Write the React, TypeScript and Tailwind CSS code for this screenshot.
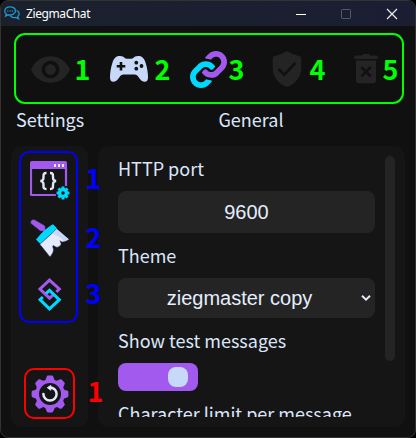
import React from "react";

const cjk = "font-['Noto_Sans_CJK_SC',sans-serif]";

function Num({ n, className }: { n: number; className: string }) {
  return (
    <span className={`${cjk} w-[17px] text-center text-[27px] leading-[40px] font-bold ${className}`}>{n}</span>
  );
}

function ChatLogo() {
  return (
    <svg width="16" height="15" viewBox="0 0 16 15" fill="none" stroke="#2597cc" strokeWidth="1.3" className="shrink-0">
      <path d="M6 .8C3 .8.8 2.5.8 4.9c0 1.300.6 2.300 1.500 3L1.600 10l2.600-1.200c2.900.7 7.300-.6 7.300-4C11.500 2.400 9 .8 6 .8Z" />
      <path d="M12.500 4.500c1.600.6 2.600 1.700 2.600 3.200 0 1.200-.6 2-1.400 2.700l.8 2.400-2.700-1.300c-2.200.5-4.500-.1-5.600-1.900" />
      <path d="M3.300 5h1M5.600 5h1M7.900 5h1" strokeWidth="1.300" />
    </svg>
  );
}

function Eye() {
  return (
    <svg width="39" height="27" viewBox="1 4.500 22 15" fill="#242424">
      <path d="M12 4.500C7 4.500 2.730 7.610 1 12c1.730 4.390 6 7.500 11 7.500s9.270-3.110 11-7.500c-1.730-4.390-6-7.500-11-7.500zM12 17c-2.760 0-5-2.240-5-5s2.240-5 5-5 5 2.240 5 5-2.240 5-5 5zm0-8c-1.660 0-3 1.340-3 3s1.340 3 3 3 3-1.340 3-3-1.340-3-3-3z" />
    </svg>
  );
}

function Gamepad() {
  return (
    <svg width="38" height="26" viewBox="0 0 38 26">
      <path
        d="M10 0c2.400 0 3.500.8 4.500 1.800.8.700 1.300.9 2.200.9h4.600c.9 0 1.400-.2 2.200-.9C24.500.8 25.600 0 28 0c3.700 0 6 1.800 7.500 6.500C37.300 12 38 17 38 21.500c0 2.800-1.200 4.300-3.200 4.300-2.500 0-4-1.500-5.800-4-1.600-2.200-2.500-3.300-4.500-3.300h-11c-2 0-2.900 1.100-4.500 3.300-1.800 2.500-3.300 4-5.800 4-2 0-3.200-1.500-3.200-4.300C0 17 .7 12 2.500 6.500 4 1.800 6.300 0 10 0Z"
        fill="#c7d9f9"
      />
      <path d="M11 6v8.500M6.700 10.200h8.600" stroke="#111" strokeWidth="2.600" />
      <g fill="#111">
        <circle cx="26.300" cy="6.700" r="1.900" />
        <circle cx="31.500" cy="10" r="1.900" />
        <circle cx="26.300" cy="12.700" r="1.900" />
      </g>
    </svg>
  );
}

const hook =
  "M326.612 185.391c59.747 59.809 58.927 155.698.36 214.590-.11.12-.24.25-.36.37l-67.2 67.2c-59.270 59.270-155.699 59.262-214.960 0-59.270-59.260-59.270-155.700 0-214.960l37.106-37.106c9.840-9.840 26.786-3.300 27.294 10.606.648 17.722 3.826 35.527 9.690 52.721 1.986 5.822.567 12.262-3.783 16.612l-13.087 13.087c-28.026 28.026-28.905 73.660-1.155 101.960 28.024 28.579 74.086 28.749 102.325.51l67.2-67.190c28.191-28.191 28.073-73.757 0-101.830-3.701-3.694-7.429-6.564-10.341-8.569a16.037 16.037 0 0 1-6.947-12.606c-.396-10.567 3.348-21.456 11.698-29.806l21.054-21.055c5.521-5.521 14.182-6.199 20.584-1.731a152.482 152.482 0 0 1 20.522 17.197z";

function Chain() {
  return (
    <svg width="37" height="37" viewBox="0 0 512 512">
      <path d={hook} transform="matrix(0 -1 -1 0 512 512)" fill="#00d9ff" />
      <path d={hook} transform="rotate(180 256 256) matrix(0 -1 -1 0 512 512)" fill="#a259ee" />
    </svg>
  );
}

function Shield() {
  return (
    <svg width="30" height="36" viewBox="0 0 30 36">
      <path d="M15 .2c.6 0 1 .2 1.600.5 3.200 2 6.600 3.500 10.600 4.300 1.500.3 2.100 1.200 2.100 2.700V17c0 8.500-5.300 15.300-13.200 18.500-.8.300-1.400.3-2.200 0C6 32.300.7 25.500.7 17V7.700C.7 6.200 1.300 5.300 2.800 5c4-.8 7.400-2.300 10.600-4.300.6-.3 1-.5 1.600-.5Z" fill="#242424" />
      <path d="m6.500 18 5.800 5.700L23.300 12" fill="none" stroke="#111" strokeWidth="2.800" />
    </svg>
  );
}

function Trash() {
  return (
    <svg width="24" height="30" viewBox="0 0 24 30">
      <path d="M7.500 1.500 9 0h6l1.500 1.500h6c.8 0 1.200.4 1.200 1.200V5H.300V2.700c0-.8.4-1.200 1.200-1.200ZM2 6.500h20V26c0 2-1 3.300-3 3.300H5c-2 0-3-1.300-3-3.300Z" fill="#242424" />
      <path d="m7.300 13 9.400 9.400m0-9.400-9.400 9.400" stroke="#111" strokeWidth="2.700" />
    </svg>
  );
}

const teeth = [0, 45, 90, 135, 180, 225, 270, 315];

function CodeWindow() {
  return (
    <svg width="40" height="39" viewBox="0 0 40 39">
      <path d="M2 0h33c1.200 0 2 .8 2 2v22h-2V8H2v25h24v2H2c-1.200 0-2-.8-2-2V2C0 .8.800 0 2 0Z" fill="#a259ee" />
      <path d="M1 6v27c0 .6.400 1 1 1h24M36 6v19" fill="none" stroke="#a259ee" strokeWidth="2.200" />
      <path d="M24 3h2v3h-2zM28 3h2v3h-2zM32 3h2v3h-2z" fill="#e3e9fb" />
      <path d="M16.500 12c-3 0-3 1-3 3.500 0 3-.2 4-3 4.500 2.800.5 3 1.500 3 4.500 0 2.500 0 3.500 3 3.500M20 12c3 0 3 1 3 3.500 0 3 .2 4 3 4.500-2.800.5-3 1.500-3 4.500 0 2.500 0 3.500-3 3.500" fill="none" stroke="#e3e9fb" strokeWidth="2.400" />
      <circle cx="33" cy="32" r="7.500" fill="#151515" />
      <g transform="translate(33 32)" fill="#00d9ff">
        {teeth.map((a) => (
          <path key={a} d="M-1.500-6.400h3V-3h-3z" transform={`rotate(${a})`} />
        ))}
        <circle r="3.400" fill="none" stroke="#00d9ff" strokeWidth="3.200" />
      </g>
    </svg>
  );
}

function Brush() {
  return (
    <svg width="40" height="39" viewBox="0 0 40 39">
      <g strokeLinejoin="round">
        <path d="M.8 4.600C-.2 2 2.200-.3 4.700.8l9 5.100c1.800 1 1.800 2.200 1.600 4.500l5.500-1.200-8 8.500 1-5.500c-2.600.3-4.200 0-5.300-1.600Z" fill="#a259ee" stroke="#262a4a" strokeWidth=".6" />
        <path d="m23 5.200 4.200 4.300L10.500 25 6 20.600c3.800-5 10.200-11.500 17-15.400Z" fill="#00d9ff" />
        <path d="M26.800 10 39 20.500c-2.500 1.300-4.500 2.500-6.300 2.500-1.700-.1-2-.8-2.500-1.300 0 1.300 1.200 2.600.8 3.700-.8 2-3.200 3-4.400 2.800-1.700-.1-2.400-1.400-3.500-1.600-1 .8.500 2.800.4 4.400-.1 3-2.500 5.500-3.500 7L9.800 25.300Z" fill="#e4eafc" stroke="#262a4a" strokeWidth=".6" />
        <path d="m26.800 10 12 10.300-4.600 2L29 17.500l-7-3Z" fill="#c7d5f6" />
      </g>
    </svg>
  );
}

function Rings() {
  return (
    <svg width="24" height="34" viewBox="0 0 24 34" fill="none" strokeWidth="3">
      <path d="M18.300 13.800 21.300 11 11.500 2.100 2 11l9.500 9.200 3.700-3.300" stroke="#a259ee" />
      <path d="M4.800 19 2 21.700l9.500 9.200 9.800-9.200-9.800-9.400-3.500 3.200" stroke="#00d9ff" />
    </svg>
  );
}

function RestartGear() {
  return (
    <svg width="38" height="38" viewBox="-19 -19 38 38">
      <g fill="#a259ee">
        {teeth.map((a) => (
          <path key={a} d="M-6.500-12Q-4-14-3.400-17Q-3.100-18.400-2-18.400H2Q3.100-18.400 3.400-17Q4-14 6.500-12Z" transform={`rotate(${a})`} />
        ))}
        <circle r="14.600" />
      </g>
      <circle r="11" fill="#151515" />
      <path d="M-6.600 0A6.600 6.600 0 1 0 0-6.600" fill="none" stroke="#e3e9fb" strokeWidth="2.500" strokeLinecap="round" />
      <path d="M.8-8.500-2.700-6.300.8-3.800Z" fill="#e3e9fb" stroke="#e3e9fb" strokeLinejoin="round" />
    </svg>
  );
}

function Label({ children }: { children: React.ReactNode }) {
  return <div className={`${cjk} text-[18px] leading-[28px] whitespace-nowrap text-[#dce6fb]`}>{children}</div>;
}

export default function App() {
  return (
    <div className="h-[438px] w-[416px] overflow-hidden bg-black">
      <div className="flex h-full flex-col overflow-hidden rounded-[8px] border border-[#333] bg-[#101010]">
        <header className="flex h-[25px] shrink-0 items-center bg-linear-to-r from-[#1a212c] to-[#1b1e33] pl-[3px]">
          <ChatLogo />
          <span className="ml-[6px] font-['Noto_Sans',sans-serif] text-[12px] leading-[16px] tracking-[-0.4px] text-white">ZiegmaChat</span>
          <svg className="ml-auto mr-[16px]" width="104" height="12" viewBox="0 0 104 12" fill="none">
            <path d="M1 6.500h10" stroke="#fff" />
            <rect x="46.500" y="1.500" width="9" height="9" rx=".7" stroke="#555769" />
            <path d="m92 1 10 10m0-10L92 11" stroke="#eee" strokeWidth="1.200" />
          </svg>
        </header>

        <nav className="mt-[7px] ml-[13px] flex h-[71px] w-[390px] shrink-0 items-center rounded-[11px] border-2 border-[#00ff00] pt-px pl-[15px]">
          <Eye />
          <Num n={1} className="ml-[4px] text-[#00ff00]" />
          <div className="ml-[19px]"><Gamepad /></div>
          <Num n={2} className="ml-[6px] text-[#00ff00]" />
          <div className="ml-[19px]"><Chain /></div>
          <Num n={3} className="ml-px text-[#00ff00]" />
          <div className="ml-[27px]"><Shield /></div>
          <Num n={4} className="ml-[7px] text-[#00ff00]" />
          <div className="ml-[28px]"><Trash /></div>
          <Num n={5} className="ml-[4px] text-[#00ff00]" />
        </nav>

        <div className="mt-px flex h-[28px] shrink-0 pl-[15px]">
          <div className="w-[81px] shrink-0"><Label>Settings</Label></div>
          <div className="flex w-[308px] justify-center"><Label>General</Label></div>
        </div>

        <main className="mt-[13px] ml-[10px] flex h-[281px] gap-[10px]">
          <aside className="relative flex w-[77px] shrink-0 flex-col items-center rounded-[10px] bg-[#151515] pt-[5px] pb-[8px]">
            <div className="flex h-[172px] w-[59px] -translate-x-px flex-col items-center rounded-[10px] border-2 border-[#0000ff]">
              <div className="mt-[8px] ml-[3px]"><CodeWindow /></div>
              <div className="mt-[19px] ml-[2px]"><Brush /></div>
              <div className="mt-[20px] ml-[2px]"><Rings /></div>
            </div>
            <div className="mt-auto flex h-[51px] w-[51px] items-center justify-center rounded-[10px] border-2 border-[#ff0000]">
              <RestartGear />
            </div>
            <div className="absolute top-[12px] left-[74px] z-10 flex flex-col">
              <Num n={1} className="text-[#0000ff]" />
              <Num n={2} className="mt-[19px] text-[#0000ff]" />
              <Num n={3} className="mt-[16px] text-[#0000ff]" />
              <Num n={1} className="mt-[58px] ml-[2px] text-[#ff0000]" />
            </div>
          </aside>

          <section className="flex w-[307px] rounded-[10px] bg-[#151515] pr-[10px] pb-[10px] pl-[20px]">
            <div className="h-[271px] w-[257px] overflow-hidden pt-[8px]">
              <Label>HTTP port</Label>
              <div className="mt-[9px] flex h-[42px] items-center justify-center rounded-[8px] bg-[#242424] font-['Liberation_Sans',sans-serif] text-[20px] text-[#e6eefd]">
                9600
              </div>
              <div className="mt-[8px]"><Label>Theme</Label></div>
              <div className="mt-[9px] flex h-[40px] items-center rounded-[8px] bg-[#242424] pr-[4px] font-['Liberation_Sans',sans-serif] text-[20px] text-[#e6eefd]">
                <span className="flex-1 text-center whitespace-nowrap">ziegmaster copy</span>
                <svg width="10" height="8" viewBox="0 0 10 8" fill="none">
                  <path d="m1 1.700 4 4 4-4" stroke="#e3e9fb" strokeWidth="2" />
                </svg>
              </div>
              <div className="mt-[8px]"><Label>Show test messages</Label></div>
              <div className="mt-[9px] flex h-[28px] w-[80px] items-center justify-end rounded-[8px] bg-[#a259ee] pr-[10px]">
                <div className="h-[20px] w-[20px] rounded-[8px] bg-[#c7d9f9]" />
              </div>
              <div className="mt-[8px]"><Label>Character limit per message</Label></div>
            </div>
            <div className="mt-[10px] ml-[10px] h-[205px] w-[10px] rounded-full bg-[#242424]" />
          </section>
        </main>
      </div>
    </div>
  );
}
